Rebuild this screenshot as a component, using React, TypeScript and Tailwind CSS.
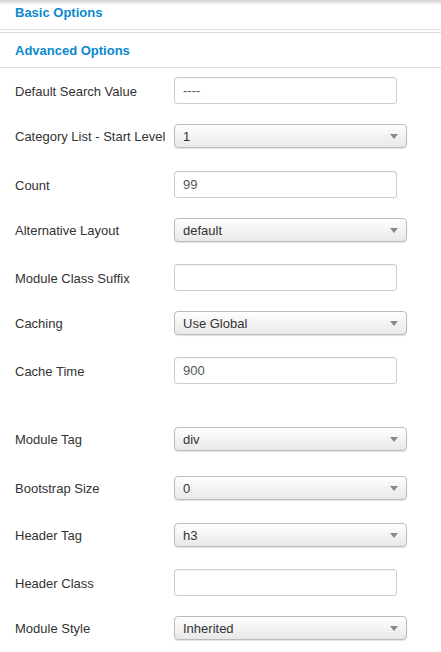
type Row = {
  label: string;
  kind: "input" | "select";
  value: string;
  mt: string;
};

const rows: Row[] = [
  { label: "Default Search Value", kind: "input", value: "----", mt: "mt-[9px]" },
  { label: "Category List - Start Level", kind: "select", value: "1", mt: "mt-[20px]" },
  { label: "Count", kind: "input", value: "99", mt: "mt-[23px]" },
  { label: "Alternative Layout", kind: "select", value: "default", mt: "mt-[20px]" },
  { label: "Module Class Suffix", kind: "input", value: "", mt: "mt-[22px]" },
  { label: "Caching", kind: "select", value: "Use Global", mt: "mt-[20px]" },
  { label: "Cache Time", kind: "input", value: "900", mt: "mt-[22px]" },
  { label: "Module Tag", kind: "select", value: "div", mt: "mt-[43px]" },
  { label: "Bootstrap Size", kind: "select", value: "0", mt: "mt-[25px]" },
  { label: "Header Tag", kind: "select", value: "h3", mt: "mt-[23px]" },
  { label: "Header Class", kind: "input", value: "", mt: "mt-[22px]" },
  { label: "Module Style", kind: "select", value: "Inherited", mt: "mt-[20px]" },
];

function Field({ row }: { row: Row }) {
  if (row.kind === "input") {
    return (
      <div className="flex h-[27px] w-[223px] items-center rounded-[3px] border border-[#cccccc] bg-white pl-[8px] pt-[1px] text-[13px] text-[#555555] shadow-[inset_0_1px_1px_rgba(0,0,0,0.06)]">
        {row.value}
      </div>
    );
  }
  return (
    <div className="relative flex h-[24px] w-[233px] items-center rounded-[4px] border border-[#bbbbbb] bg-gradient-to-b from-white to-[#e8e8e8] pl-[8px] pt-[1px] text-[13px] text-[#333333] shadow-[0_1px_1px_rgba(0,0,0,0.12)]">
      {row.value}
      <svg
        className="absolute right-[8px] top-[9px]"
        width="8"
        height="5"
        viewBox="0 0 8 5"
      >
        <path d="M0 0h8L4 5z" fill="#888888" />
      </svg>
    </div>
  );
}

export default function App() {
  return (
    <div
      className="relative h-[652px] w-[441px] overflow-hidden bg-white"
      style={{ fontFamily: '"Liberation Sans", Arial, sans-serif' }}
    >
      <div className="absolute inset-x-0 top-0 h-[5px] bg-gradient-to-b from-[#cfcfcf] to-transparent" />

      <div className="flex h-[30px] items-center border-b border-[#dddddd] pl-[15px] pb-[4px] text-[13px] font-bold text-[#0a88cf]">
        Basic Options
      </div>
      <div className="mt-[2px] flex h-[36px] items-center border-y border-[#dddddd] pl-[15px] pt-[1px] text-[13px] font-bold text-[#0a88cf]">
        Advanced Options
      </div>

      <div className="flex flex-col">
        {rows.map((r) => (
          <div key={r.label} className={`flex items-center ${r.mt}`}>
            <div className="w-[174px] pl-[15px] pt-[2px] text-[13px] text-[#333333]">
              {r.label}
            </div>
            <Field row={r} />
          </div>
        ))}
      </div>
    </div>
  );
}
